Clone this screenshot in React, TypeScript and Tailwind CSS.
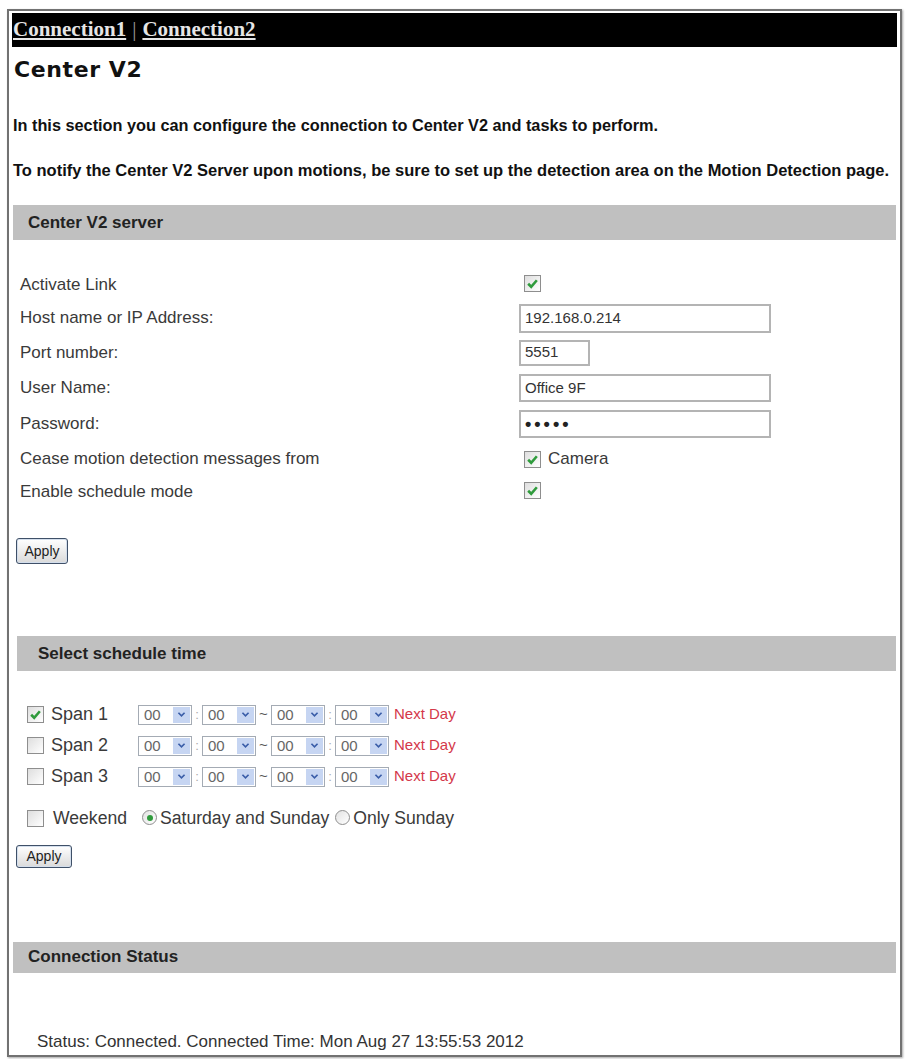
import React from "react";

const sans = "font-['Liberation_Sans',Arial,sans-serif]";

function Check({ on }: { on?: boolean }) {
  return (
    <span className="inline-flex h-[17px] w-[17px] shrink-0 items-center justify-center border border-[#8e8e8e] bg-linear-to-br from-[#dedede] to-white">
      {on && (
        <svg viewBox="0 0 12 12" className="h-[13px] w-[13px]">
          <path d="M2 6.2 L4.8 9 L10 3" fill="none" stroke="#2f9b3c" strokeWidth="2.4" />
        </svg>
      )}
    </span>
  );
}

function Radio({ on }: { on?: boolean }) {
  return (
    <span className="inline-flex h-[15px] w-[15px] shrink-0 items-center justify-center rounded-full border border-[#8e8e8e] bg-linear-to-br from-[#e2e2e2] to-white">
      {on && <span className="h-[6px] w-[6px] rounded-full bg-[#2f9b3c]" />}
    </span>
  );
}

function TimeSelect() {
  return (
    <span className="inline-flex h-[20px] w-[54px] items-stretch border border-[#a4abb4] bg-white">
      <span className={`flex-1 pl-[5px] text-[15px] leading-[18px] text-[#666] ${sans}`}>00</span>
      <span className="my-[1px] mr-[1px] flex w-[17px] items-center justify-center bg-[#c6d5f2]">
        <svg viewBox="0 0 10 8" className="h-[7px] w-[9px]">
          <path d="M1.5 2 L5 5.5 L8.5 2" fill="none" stroke="#3a5da8" strokeWidth="1.9" />
        </svg>
      </span>
    </span>
  );
}

function ApplyButton({ w, h }: { w: string; h: string }) {
  return (
    <button
      className={`${w} ${h} rounded-[3px] border border-[#3f5068] bg-linear-to-b from-white to-[#dadada] text-[14px] leading-none text-[#222] shadow-[inset_0_0_0_1px_#d3deec] ${sans}`}
    >
      Apply
    </button>
  );
}

function SectionBar({ title, className }: { title: string; className: string }) {
  return (
    <div className={`flex items-center bg-[#c0c0c0] text-[17px] font-bold text-[#222] ${sans} ${className}`}>
      {title}
    </div>
  );
}

const fields = [
  { label: "Activate Link", h: "h-[32px]", kind: "check" },
  { label: "Host name or IP Address:", h: "h-[34px]", kind: "text", value: "192.168.0.214", w: "w-[252px]", ih: "h-[29px]" },
  { label: "Port number:", h: "h-[35px]", kind: "text", value: "5551", w: "w-[71px]", ih: "h-[26px]" },
  { label: "User Name:", h: "h-[36px]", kind: "text", value: "Office 9F", w: "w-[252px]", ih: "h-[28px]" },
  { label: "Password:", h: "h-[36px]", kind: "password", value: "•••••", w: "w-[252px]", ih: "h-[28px]" },
  { label: "Cease motion detection messages from", h: "h-[34px]", kind: "camera" },
  { label: "Enable schedule mode", h: "h-[31px]", kind: "check" },
];

const spans = [
  { label: "Span 1", on: true },
  { label: "Span 2", on: false },
  { label: "Span 3", on: false },
];

export default function App() {
  return (
    <div className="min-h-[1059px] bg-white pl-[7px] pt-[9px]">
      <div className="w-[895px] border-2 border-[#727272] px-[3px] pb-[3px] pt-[2px] shadow-[1px_1px_2px_rgba(0,0,0,0.35)]">
        {/* connection tabs */}
        <div className="flex h-[34px] items-center bg-black pl-[1px] font-['Liberation_Serif','Times_New_Roman',serif] text-[21px] font-bold text-[#e6e6e6]">
          <span className="underline underline-offset-2">Connection1</span>
          <span className="px-[6px] font-normal text-[#9a9a9a]">|</span>
          <span className="underline underline-offset-2">Connection2</span>
        </div>

        <div className="pl-[2px] pt-[11px] font-['DejaVu_Sans',Verdana,sans-serif] text-[22px] font-bold leading-[24px] tracking-[0.6px] text-[#111]">
          Center V2
        </div>

        <p className={`mt-[33px] pl-[1px] text-[16.3px] font-bold leading-[20px] text-[#111] ${sans}`}>
          In this section you can configure the connection to Center V2 and tasks to perform.
        </p>
        <p className={`mt-[25px] whitespace-nowrap pl-[1px] text-[16.5px] font-bold leading-[20px] text-[#111] ${sans}`}>
          To notify the Center V2 Server upon motions, be sure to set up the detection area on the Motion Detection page.
        </p>

        <SectionBar title="Center V2 server" className="ml-[1px] mr-[1px] mt-[25px] h-[35px] pl-[15px]" />

        {/* server settings */}
        <div className={`mt-[29px] pl-[8px] text-[17px] text-[#3a3a3a] ${sans}`}>
          {fields.map((f) => (
            <div key={f.label} className={`flex items-center ${f.h}`}>
              <div className="w-[499px]">{f.label}</div>
              {f.kind === "check" && (
                <div className="pl-[5px]">
                  <Check on />
                </div>
              )}
              {f.kind === "camera" && (
                <div className="flex items-center gap-[7px] pl-[5px]">
                  <Check on />
                  <span className="leading-[18px]">Camera</span>
                </div>
              )}
              {(f.kind === "text" || f.kind === "password") && (
                <div
                  className={`flex items-center border-2 border-[#b4b4b4] bg-white pl-[4px] ${f.w} ${f.ih} ${
                    f.kind === "password" ? "text-[18px] font-bold tracking-[3px] text-[#222]" : "text-[15px] text-[#333]"
                  }`}
                >
                  {f.value}
                </div>
              )}
            </div>
          ))}
        </div>

        <div className="mt-[31px] pl-[4px]">
          <ApplyButton w="w-[52px]" h="h-[26px]" />
        </div>

        <SectionBar title="Select schedule time" className="ml-[5px] mr-[1px] mt-[72px] h-[35px] pl-[21px]" />

        {/* schedule spans */}
        <div className={`mt-[28px] pl-[15px] text-[18px] text-[#3a3a3a] ${sans}`}>
          {spans.map((s) => (
            <div key={s.label} className="flex h-[31px] items-center">
              <div className="flex w-[111px] items-center gap-[7px]">
                <Check on={s.on} />
                <span>{s.label}</span>
              </div>
              <TimeSelect />
              <span className="w-[10px] text-center text-[13px] text-[#aaa]">:</span>
              <TimeSelect />
              <span className="w-[15px] text-center text-[15px] text-[#555]">~</span>
              <TimeSelect />
              <span className="w-[10px] text-center text-[13px] text-[#aaa]">:</span>
              <TimeSelect />
              <span className="pl-[5px] text-[15px] text-[#d4384a]">Next Day</span>
            </div>
          ))}
          <div className="mt-[11px] flex h-[30px] items-center text-[17.6px]">
            <Check />
            <span className="ml-[9px]">Weekend</span>
            <span className="ml-[15px] flex items-center gap-[3px]">
              <Radio on />
              Saturday and Sunday
            </span>
            <span className="ml-[6px] flex items-center gap-[3px]">
              <Radio />
              Only Sunday
            </span>
          </div>
        </div>

        <div className="mt-[10px] pl-[4px]">
          <ApplyButton w="w-[56px]" h="h-[23px]" />
        </div>

        <SectionBar title="Connection Status" className="ml-[1px] mr-[1px] mt-[74px] h-[31px] pl-[15px]" />

        <div className={`mt-[59px] pl-[25px] text-[17px] leading-[20px] text-[#333] ${sans}`}>
          Status: Connected. Connected Time: Mon Aug 27 13:55:53 2012
        </div>
      </div>
    </div>
  );
}
